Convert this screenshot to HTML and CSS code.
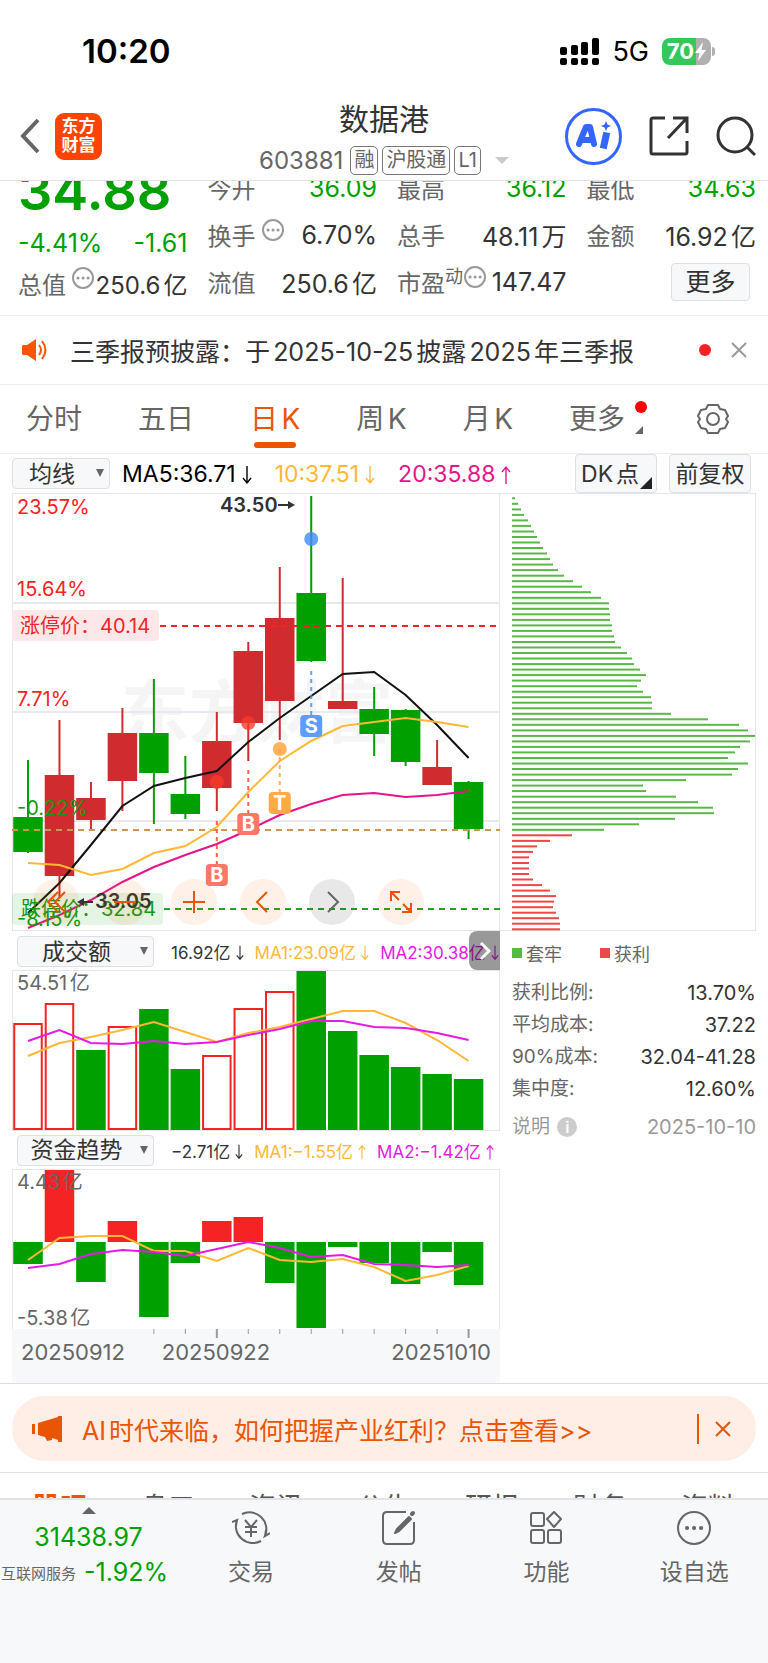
FILE: index.html
```html
<!DOCTYPE html>
<html lang="zh-CN">
<head>
    <meta charset="UTF-8">
    <meta name="viewport" content="width=device-width, initial-scale=1.0">
    <title>数据港 603881</title>
    <link rel="stylesheet" href="styles.css">
</head>
<body>

<svg class="defs" aria-hidden="true">
    <symbol id="down" viewBox="0 0 10 20"><path d="M5 1v17M1 13l4 5 4-5" stroke-width="1.4"/></symbol>
    <symbol id="up" viewBox="0 0 10 20"><path d="M5 19V2M1 7l4-5 4 5" stroke-width="1.4"/></symbol>
    <symbol id="dots" viewBox="0 0 22 22"><circle cx="11" cy="11" r="10"/><path d="M6 11h.1M11 11h.1M16 11h.1" stroke-width="3" stroke-linecap="round"/></symbol>
    <symbol id="close" viewBox="0 0 16 16"><path d="M1 1l14 14M15 1L1 15"/></symbol>
</svg>

<div class="status-bar">
    <span class="clock">10:20</span>
    <div class="status-right">
        <svg width="39" height="27" viewBox="0 0 39 27">
            <rect x="0" y="9" width="7" height="8" rx="2"/>
            <rect x="11" y="7" width="7" height="10" rx="2"/>
            <rect x="21" y="4" width="7" height="13" rx="2"/>
            <rect x="32" y="0" width="7" height="17" rx="2"/>
            <rect x="0" y="20" width="7" height="7" rx="2"/>
            <rect x="11" y="20" width="7" height="7" rx="2"/>
            <rect x="21" y="20" width="7" height="7" rx="2"/>
            <rect x="32" y="20" width="7" height="7" rx="2"/>
        </svg>
        <span class="network">5G</span>
        <div class="battery">
            <span>70</span>
            <svg width="11" height="19" viewBox="0 0 11 19"><path fill="#fff" d="M8 0L0 11h4.500L3 19l8-11H6.500z"/></svg>
        </div>
    </div>
</div>

<header class="header">
    <div class="header-left">
        <button class="icon-btn" aria-label="返回">
            <svg width="20" height="36" viewBox="0 0 20 36"><path d="M18 2L3 18l15 16" fill="none" stroke="#666" stroke-width="4"/></svg>
        </button>
        <a class="logo" href="#">东方<br>财富</a>
    </div>
    <div class="header-title">
        <h1>数据港</h1>
        <div class="code-row">
            <span class="code">603881</span>
            <span class="tag">融</span>
            <span class="tag">沪股通</span>
            <span class="tag">L1</span>
            <span class="code-arrow"></span>
        </div>
    </div>
    <div class="header-right">
        <button class="icon-btn" aria-label="AI">
            <svg width="57" height="57" viewBox="0 0 57 57" fill="none" stroke="#3366ff">
                <circle cx="28.500" cy="28.500" r="27" stroke-width="3"/>
                <path d="M14 36l7-17h4l4 17M18 32h9" stroke-width="6" stroke-linejoin="round" stroke-linecap="round"/>
                <path d="M41 28l-2 9" stroke-width="7" stroke-linecap="square"/>
                <path d="M41 13l1.500 3.500L46 18l-3.500 1.500L41 23l-1.500-3.500L36 18l3.500-1.500z" fill="#3366ff" stroke="none"/>
            </svg>
        </button>
        <button class="icon-btn" aria-label="分享">
            <svg width="40" height="40" viewBox="0 0 40 40" fill="none" stroke="#333" stroke-width="3">
                <path d="M16 2H4q-2 0-2 2v32q0 2 2 2h32q2 0 2-2V25"/><path d="M24 2h14v15M38 2L19 22"/>
            </svg>
        </button>
        <button class="icon-btn" aria-label="搜索">
            <svg width="40" height="40" viewBox="0 0 40 40" fill="none" stroke="#333" stroke-width="3">
                <circle cx="19" cy="19" r="17"/><path d="M31 31l8 8"/>
            </svg>
        </button>
    </div>
</header>

<section class="quote">
    <div class="quote-grid">
        <div class="quote-col">
            <div class="price">34.88</div>
            <div class="change"><span>-4.41%</span><span>-1.61</span></div>
            <div class="quote-last"><span class="name">总值</span><svg class="dots"><use href="#dots"/></svg><span>250.6亿</span></div>
        </div>
        <div class="quote-col">
            <div class="quote-row"><span class="name">今开</span><span class="val green">36.09</span></div>
            <div class="quote-row"><span class="name">换手</span><svg class="dots"><use href="#dots"/></svg><span class="val">6.70%</span></div>
            <div class="quote-row"><span class="name">流值</span><span class="val">250.6亿</span></div>
        </div>
        <div class="quote-col">
            <div class="quote-row"><span class="name">最高</span><span class="val green">36.12</span></div>
            <div class="quote-row"><span class="name">总手</span><span class="val">48.11万</span></div>
            <div class="quote-row tight"><span class="name">市盈<sup>动</sup></span><svg class="dots"><use href="#dots"/></svg><span class="val">147.47</span></div>
        </div>
        <div class="quote-col">
            <div class="quote-row"><span class="name">最低</span><span class="val green">34.63</span></div>
            <div class="quote-row"><span class="name">金额</span><span class="val">16.92亿</span></div>
            <div class="quote-row"><button class="more-btn">更多</button></div>
        </div>
    </div>
</section>

<section class="notice">
    <svg width="26" height="22" viewBox="0 0 26 22" fill="none" stroke="#ff5500" stroke-width="2">
        <path d="M1 6h4l9-6v22l-9-6H1q-1 0-1-2V8q0-2 1-2z" fill="#ff5500" stroke="none"/>
        <path d="M17 6q4 5 0 10M20 2q7 9 0 18"/>
    </svg>
    <a class="notice-text" href="#">三季报预披露：于2025-10-25披露2025年三季报</a>
    <span class="red-dot"></span>
    <button class="icon-btn" aria-label="关闭公告"><svg class="close"><use href="#close"/></svg></button>
</section>

<nav class="tabs">
    <a href="#">分时</a>
    <a href="#">五日</a>
    <a href="#" class="active">日K</a>
    <a href="#">周K</a>
    <a href="#">月K</a>
    <a href="#" class="tab-more">更多<i class="tab-dot"></i><i class="corner"></i></a>
    <button class="icon-btn" aria-label="设置">
        <svg width="32" height="32" viewBox="0 0 32 32" fill="none" stroke="#666" stroke-width="2">
            <path d="M11 2h10l2 4 5 1 3 6-2 3 2 3-3 6-5 1-2 4H11l-2-4-5-1-3-6 2-3-2-3 3-6 5-1z" stroke-linejoin="round"/><circle cx="16" cy="16" r="6"/>
        </svg>
    </button>
</nav>

<div class="ma-bar">
    <span class="select small"><select aria-label="均线"><option>均线</option></select></span>
    <span class="ma-item">MA5:36.71<svg class="arrow"><use href="#down"/></svg></span>
    <span class="ma-item yellow">10:37.51<svg class="arrow"><use href="#down"/></svg></span>
    <span class="ma-item pink">20:35.88<svg class="arrow"><use href="#up"/></svg></span>
    <button class="box-btn dk">DK点<i class="corner"></i></button>
    <button class="box-btn">前复权</button>
</div>

<main class="charts">
    <div class="left">
        <div class="kline">
            <svg viewBox="0 0 488 438">
                <text class="watermark" x="109" y="244">东方财富</text>
                <path class="frame" d="M.5 438V.500H488M487.500 0v438M0 437.500h488"/>
                <path class="grid" d="M0 110h488M0 219h488M0 328h488"/>
                <g id="candles"></g>
                <path class="dash red-dash" d="M148 133h340"/>
                <path class="dash brown-dash" d="M0 337h488"/>
                <path class="dash green-dash" d="M152 416h336"/>
                <g id="klines"></g>
                <rect class="limit-up" y="117" width="147" height="31" rx="4"/>
                <rect class="limit-down" y="400" width="151" height="32" rx="4"/>
                <text class="t-red" x="5" y="21">23.57%</text>
                <text class="t-red" x="5" y="103">15.64%</text>
                <text class="t-red" x="5" y="213">7.71%</text>
                <text class="t-green" x="5" y="322">-0.22%</text>
                <text class="t-green" x="5" y="433">-8.15%</text>
                <text class="t-red" x="8" y="140">涨停价：40.14</text>
                <text class="t-green" x="9" y="423">跌停价：32.84</text>
                <text class="t-bold" x="208" y="19">43.50</text>
                <path class="pointer" d="M266 12h14"/><path d="M276 8l7 4-7 4z" fill="#333"/>
                <text class="t-bold" x="83" y="415">33.05</text>
                <path class="pointer" d="M68 409h13"/><path d="M72 405l-7 4 7 4z" fill="#333"/>
                <g id="marks"></g>
            </svg>
            <div class="tools">
                <button aria-label="最左"><svg viewBox="0 0 24 24"><path d="M14 2L4 12l10 10M21 2L11 12l10 10"/></svg></button>
                <button aria-label="缩小"><svg viewBox="0 0 24 24"><path d="M1 12h22"/></svg></button>
                <button aria-label="放大"><svg viewBox="0 0 24 24"><path d="M1 12h22M12 1v22"/></svg></button>
                <button aria-label="左移"><svg viewBox="0 0 24 24"><path d="M16 2L6 12l10 10"/></svg></button>
                <button aria-label="右移" class="gray"><svg viewBox="0 0 24 24"><path d="M8 2l10 10L8 22"/></svg></button>
                <button aria-label="全屏"><svg viewBox="0 0 24 24"><path d="M2 11V2h9M2 2l8 8M22 13v9h-9M22 22l-8-8"/></svg></button>
            </div>
        </div>

        <div class="sub-bar">
            <span class="select"><select aria-label="成交额指标"><option>成交额</option></select></span>
            <span class="sub-item">16.92亿<svg class="arrow"><use href="#down"/></svg></span>
            <span class="sub-item yellow">MA1:23.09亿<svg class="arrow"><use href="#down"/></svg></span>
            <span class="sub-item purple">MA2:30.38亿<svg class="arrow"><use href="#down"/></svg></span>
            <button class="expand" aria-label="收起筹码"><svg width="12" height="20" viewBox="0 0 12 20"><path d="M2 2l8 8-8 8" fill="none" stroke="#fff" stroke-width="3"/></svg></button>
        </div>
        <svg viewBox="0 0 488 161">
            <path class="frame" d="M0 .5h488M.5 0v161M487.500 0v161M0 160.500h488"/>
            <g id="volume"></g>
            <text class="t-gray" x="5" y="20">54.51亿</text>
        </svg>

        <div class="sub-bar fund-bar">
            <span class="select"><select aria-label="资金指标"><option>资金趋势</option></select></span>
            <span class="sub-item">−2.71亿<svg class="arrow"><use href="#down"/></svg></span>
            <span class="sub-item yellow">MA1:−1.55亿<svg class="arrow"><use href="#up"/></svg></span>
            <span class="sub-item purple">MA2:−1.42亿<svg class="arrow"><use href="#up"/></svg></span>
        </div>
        <svg viewBox="0 0 488 160">
            <path class="frame" d="M0 .5h488M.5 0v160M487.500 0v160"/>
            <g id="fund"></g>
            <text class="t-gray" x="5" y="20">4.43亿</text>
            <text class="t-gray" x="5" y="156">-5.38亿</text>
        </svg>
        <svg class="axis" viewBox="0 0 488 54">
            <g id="ticks"></g>
            <text x="9" y="31">20250912</text>
            <text x="204" y="31" text-anchor="middle">20250922</text>
            <text x="479" y="31" text-anchor="end">20251010</text>
        </svg>
    </div>

    <div class="right">
        <svg viewBox="0 0 256 438">
            <path class="frame" d="M0 .5h256M255.500 0v438M0 437.500h256"/>
            <g id="chips"></g>
        </svg>
        <div class="chip-info">
            <div class="legend"><i class="sq"></i>套牢<i class="sq red"></i>获利</div>
            <dl>
                <div><dt>获利比例:</dt><dd>13.70%</dd></div>
                <div><dt>平均成本:</dt><dd>37.22</dd></div>
                <div><dt>90%成本:</dt><dd>32.04-41.28</dd></div>
                <div><dt>集中度:</dt><dd>12.60%</dd></div>
            </dl>
            <div class="explain"><a href="#">说明 <i>i</i></a><span>2025-10-10</span></div>
        </div>
    </div>
</main>

<section class="banner-wrap">
    <div class="banner">
        <svg width="30" height="26" viewBox="0 0 30 26" fill="#ea5504">
            <path d="M0 8h3v10H0zM6 7L26 1V0h4v26h-4v-2l-6-2v2l-5 1-2-4-7-2z"/>
        </svg>
        <a href="#">AI时代来临，如何把握产业红利？点击查看&gt;&gt;</a>
        <button class="icon-btn" aria-label="关闭广告"><svg class="close"><use href="#close"/></svg></button>
    </div>
</section>

<nav class="detail-tabs">
    <a href="#" class="active">股吧</a>
    <a href="#">盘口</a>
    <a href="#">资讯</a>
    <a href="#">公告</a>
    <a href="#">研报</a>
    <a href="#">财务</a>
    <a href="#">资料</a>
</nav>

<footer class="bottom-bar">
    <a href="#" class="index">
        <i class="index-arrow"></i>
        <span class="index-value">31438.97</span>
        <span class="index-row"><small>互联网服务</small><b>-1.92%</b></span>
    </a>
    <a href="#" class="bottom-item">
        <svg width="38" height="38" viewBox="0 0 38 38">
            <path d="M10 5A17 17 0 0 1 33 27l5-3M33 27l1-6M29 32A17 17 0 0 1 5 11L0 13M5 11l-1 6"/>
            <path d="M13 11l6 7 6-7M19 18v10M13 18h12M13 23h12"/>
        </svg>
        交易
    </a>
    <a href="#" class="bottom-item">
        <svg width="38" height="38" viewBox="0 0 38 38">
            <path d="M26 3H7Q3 3 3 7v24q0 4 4 4h23q4 0 4-4V13"/><path d="M29 8l2 2-12 12-4 2 2-4zM32 5l1-1" fill="#666" stroke-linecap="round" stroke-linejoin="round"/>
            <path d="M32 5l1-1" stroke-width="4" stroke-linecap="round"/>
        </svg>
        发帖
    </a>
    <a href="#" class="bottom-item">
        <svg width="38" height="38" viewBox="0 0 38 38">
            <rect x="4" y="4" width="13" height="13" rx="2"/><path d="M27 3l7 7-7 8-7-8z" stroke-linejoin="round"/>
            <rect x="4" y="21" width="13" height="13" rx="2"/><rect x="21" y="21" width="13" height="13" rx="2"/>
        </svg>
        功能
    </a>
    <a href="#" class="bottom-item">
        <svg width="38" height="38" viewBox="0 0 38 38">
            <circle cx="19" cy="19" r="16"/><path d="M12 19h.1M19 19h.1M26 19h.1" stroke-width="4" stroke-linecap="round"/>
        </svg>
        设自选
    </a>
</footer>

<script src="charts.js"></script>
</body>
</html>
```

FILE: styles.css
```css
* {
    box-sizing: border-box;
}

body {
    margin: 0;
    background: #fff;
    color: #333;
    font-family: Inter, "Noto Sans CJK SC", sans-serif;
    font-size: 24px;
    text-autospace: normal;
}

a {
    color: inherit;
    text-decoration: none;
}

button,
select {
    font-family: inherit;
    color: inherit;
    cursor: pointer;
}

.icon-btn {
    display: flex;
    padding: 0;
    border: none;
    background: none;
}

.defs {
    position: absolute;
    width: 0;
    height: 0;
}

.green { color: #00a000; }
.yellow { color: #ffb836; }
.pink { color: #e6148c; }
.purple { color: #e619e6; }

/* status bar */
.status-bar {
    display: flex;
    justify-content: space-between;
    align-items: center;
    height: 92px;
    padding: 10px 57px 0 82px;
    color: #000;
}

.clock {
    font-size: 33px;
    font-weight: 600;
}

.status-right {
    display: flex;
    align-items: center;
    gap: 13px;
}

.network {
    font-size: 27px;
}

.battery {
    position: relative;
    display: flex;
    align-items: center;
    justify-content: center;
    gap: 1px;
    width: 49px;
    height: 27px;
    border-radius: 8px;
    background: linear-gradient(90deg, #34c759 70%, #b0b0b0 70%);
    color: #fff;
    font-size: 22px;
    font-weight: 700;
}

.battery::after {
    content: "";
    position: absolute;
    right: -4px;
    width: 3px;
    height: 9px;
    border-radius: 0 3px 3px 0;
    background: #b0b0b0;
}

/* header */
.header {
    display: grid;
    grid-template-columns: 1fr auto 1fr;
    align-items: center;
    height: 89px;
    padding: 0 12px;
    border-bottom: 1px solid #e2e2e2;
}

.header-left {
    display: flex;
    align-items: center;
    gap: 15px;
    padding-left: 8px;
}

.logo {
    width: 47px;
    height: 47px;
    padding-top: 4px;
    border-radius: 9px;
    background: #ff4400;
    color: #fff;
    font-size: 17px;
    font-weight: 700;
    line-height: 19px;
    text-align: center;
}

.header-title {
    padding-top: 4px;
    text-align: center;
}

h1 {
    margin: 0;
    font-size: 30px;
    font-weight: 400;
    line-height: 44px;
}

.code-row {
    display: flex;
    align-items: center;
    gap: 4px;
    height: 38px;
    color: #666;
}

.code {
    margin-right: 3px;
}

.tag {
    height: 29px;
    padding: 0 3px;
    border: 1px solid #777;
    border-radius: 5px;
    font-size: 20px;
    line-height: 27px;
}

.code-arrow {
    margin-left: 10px;
    border: 7px solid transparent;
    border-top-color: #ccc;
    border-bottom: none;
}

.header-right {
    display: flex;
    align-items: center;
    justify-content: flex-end;
    gap: 27px;
}

/* quote */
.quote {
    overflow: hidden;
    border-bottom: 1px solid #eee;
}

.quote-grid {
    display: grid;
    grid-template-columns: repeat(4, minmax(0, 1fr));
    gap: 20px;
    margin-top: -17px;
    padding: 0 12px 10px 18px;
    white-space: nowrap;
}

.price {
    height: 56px;
    color: #00a000;
    font-size: 54px;
    font-weight: 600;
    line-height: 54px;
}

.change {
    display: flex;
    justify-content: space-between;
    color: #00a000;
    font-size: 25px;
    line-height: 46px;
}

.quote-row,
.quote-last {
    display: flex;
    justify-content: space-between;
    align-items: center;
    height: 47px;
}

.quote-last {
    height: 34px;
}

.name {
    color: #666;
}

.val {
    font-size: 25px;
}

.name sup {
    font-size: 18px;
    line-height: 18px;
}

.dots {
    flex: none;
    width: 22px;
    height: 22px;
    margin: 0 auto 10px 6px;
    fill: none;
    stroke: #999;
    stroke-width: 2;
}

.tight .dots {
    margin-left: 1px;
}

.more-btn {
    width: 79px;
    height: 38px;
    margin: 0 6px 0 auto;
    padding: 0;
    border: 1px solid #dcdfe6;
    border-radius: 4px;
    background: #f7f8fa;
    font-size: 25px;
    line-height: 34px;
}

/* notice */
.notice {
    display: flex;
    align-items: center;
    height: 69px;
    padding: 0 21px 0 22px;
    border-bottom: 1px solid #eee;
}

.notice-text {
    flex: 1;
    margin-left: 22px;
    font-size: 25px;
    white-space: nowrap;
}

.red-dot {
    width: 12px;
    height: 12px;
    margin-right: 20px;
    border-radius: 50%;
    background: #f52323;
}

.close {
    width: 16px;
    height: 16px;
    stroke: #999;
    stroke-width: 2;
}

/* period tabs */
.tabs {
    display: flex;
    justify-content: space-between;
    align-items: center;
    height: 69px;
    padding: 0 39px 0 23px;
    border-bottom: 1px solid #eee;
    color: #666;
    font-size: 28px;
}

.tabs a {
    position: relative;
    padding: 0 3px;
    line-height: 66px;
}

.tabs .active {
    color: #ea5504;
}

.tabs .active::after {
    content: "";
    position: absolute;
    left: 7px;
    right: 7px;
    bottom: 4px;
    height: 6px;
    border-radius: 3px;
    background: #ea5504;
}

.tabs .tab-more {
    padding-right: 22px;
}

.tab-dot {
    position: absolute;
    top: 15px;
    right: 0;
    width: 12px;
    height: 12px;
    border-radius: 50%;
    background: #ff0000;
}

.corner {
    position: absolute;
    right: 4px;
    bottom: 18px;
    border: 4px solid #666;
    border-top-color: transparent;
    border-left-color: transparent;
}

/* moving average bar */
.ma-bar {
    display: flex;
    align-items: center;
    gap: 12px;
    height: 39px;
    padding: 0 17px 0 12px;
    white-space: nowrap;
}

.select {
    position: relative;
    width: 137px;
    height: 31px;
}

.select.small {
    width: 98px;
}

.select::after {
    content: "";
    position: absolute;
    top: 11px;
    right: 6px;
    border: 4px solid transparent;
    border-top: 8px solid #666;
    border-bottom: none;
    pointer-events: none;
}

.select select {
    width: 100%;
    height: 100%;
    padding: 0 22px 0 4px;
    border: 1px solid #dcdfe6;
    border-radius: 4px;
    background: #f7f8fa;
    font-size: 23px;
    line-height: 28px;
    text-align-last: center;
    appearance: none;
}

.ma-item {
    margin-right: 11px;
    color: #e6148c;
    font-size: 23px;
}

.ma-item:nth-of-type(2) {
    color: #000;
}

.ma-item.yellow {
    color: #ffb836;
}

.arrow {
    width: 10px;
    height: 20px;
    margin-left: 6px;
    vertical-align: -3px;
    fill: none;
    stroke: currentColor;
}

.box-btn {
    position: relative;
    height: 39px;
    width: 82px;
    padding: 0;
    border: 1px solid #dcdfe6;
    border-radius: 4px;
    background: #f7f8fa;
    font-size: 23px;
    line-height: 34px;
}

.dk {
    margin-left: auto;
    padding-right: 12px;
}

.dk .corner {
    right: 4px;
    bottom: 3px;
    border-width: 6px;
    border-right-color: #222;
    border-bottom-color: #222;
}

/* charts */
.charts {
    display: grid;
    grid-template-columns: minmax(0, 488fr) minmax(0, 256fr);
    padding: 0 12px;
    border-bottom: 1px solid #dcdce6;
}

.charts .left > svg,
.kline > svg,
.right > svg {
    display: block;
    width: 100%;
}

.charts text {
    font-size: 20px;
}

.frame {
    fill: none;
    stroke: #e4e6ea;
}

.grid {
    stroke: #e8eaf0;
    stroke-width: 2;
}

.charts .watermark {
    fill: #f5f5f5;
    font-size: 68px;
    font-weight: 700;
}

.dash {
    stroke-width: 2;
    stroke-dasharray: 6 5;
}

.red-dash { stroke: #f22323; }
.brown-dash { stroke: #cc9655; }
.green-dash { stroke: #22a422; }

.limit-up { fill: #fde8e9; }
.limit-down { fill: rgba(0, 160, 0, 0.1); }

.t-red { fill: #f52323; }
.t-green { fill: #129a12; }
.t-gray { fill: #666; }

.t-bold {
    fill: #333;
    font-weight: 600;
}

.pointer {
    stroke: #333;
    stroke-width: 2;
}

.line {
    fill: none;
    stroke-width: 2;
}

.mark {
    fill: #fff;
    font-weight: 700;
    text-anchor: middle;
}

.kline {
    position: relative;
}

.tools {
    position: absolute;
    left: 21px;
    bottom: 6px;
    display: flex;
    gap: 23px;
}

.tools button {
    display: flex;
    align-items: center;
    justify-content: center;
    width: 46px;
    height: 46px;
    padding: 0;
    border: none;
    border-radius: 50%;
    background: rgba(255, 85, 4, 0.09);
    color: #ea5504;
}

.tools .gray {
    background: rgba(0, 0, 0, 0.09);
    color: #666;
}

.tools svg {
    width: 24px;
    height: 24px;
    fill: none;
    stroke: currentColor;
    stroke-width: 2;
}

.sub-bar {
    position: relative;
    display: flex;
    align-items: center;
    gap: 11px;
    height: 39px;
    padding: 2px 0 0 5px;
    font-size: 17px;
    white-space: nowrap;
    text-autospace: no-autospace;
}

.fund-bar {
    height: 38px;
    padding-top: 0;
}

.sub-bar .select {
    flex: none;
    margin-right: 6px;
}

.sub-bar .arrow {
    width: 8px;
    height: 16px;
    margin-left: 5px;
    vertical-align: -2px;
}

.expand {
    position: absolute;
    top: 0;
    right: 0;
    display: flex;
    align-items: center;
    justify-content: center;
    width: 31px;
    height: 39px;
    padding: 0;
    border: none;
    border-radius: 8px 0 0 8px;
    background: rgba(0, 0, 0, 0.4);
}

.axis {
    background: #f7f8fa;
}

.charts .axis text {
    fill: #666;
    font-size: 22px;
}

/* chip distribution */
.chip-info {
    padding: 5px 0 0 12px;
    font-size: 20px;
}

.legend {
    display: flex;
    align-items: center;
    height: 34px;
    margin-bottom: 7px;
    color: #666;
    font-size: 18px;
}

.sq {
    width: 10px;
    height: 10px;
    margin-right: 4px;
    background: #5ab946;
}

.sq.red {
    margin-left: 38px;
    background: #ee4848;
}

dl {
    margin: 0;
}

dl div,
.explain {
    display: flex;
    justify-content: space-between;
    line-height: 32px;
}

dt {
    color: #666;
    font-size: 19px;
    text-autospace: no-autospace;
}

dd {
    margin: 0;
}

.explain {
    margin-top: 6px;
    color: #999;
}

.explain a {
    font-size: 19px;
}

.explain i {
    display: inline-block;
    width: 20px;
    height: 20px;
    margin-left: 2px;
    border-radius: 50%;
    background: #ccc;
    color: #fff;
    font-size: 16px;
    font-style: normal;
    font-weight: 600;
    line-height: 20px;
    text-align: center;
}

/* banner */
.banner-wrap {
    padding: 12px 12px 11px;
    border-bottom: 1px solid #e2e2e2;
}

.banner {
    display: flex;
    align-items: center;
    height: 65px;
    padding: 0 25px 0 20px;
    border-radius: 33px;
    background: #feeee6;
    color: #ea5504;
    font-size: 25px;
}

.banner a {
    flex: 1;
    margin-left: 20px;
    white-space: nowrap;
}

.banner .icon-btn {
    padding: 7px 0 7px 16px;
    border-left: 2px solid #ea5504;
}

.banner .close {
    stroke: #ea5504;
}

/* detail tabs */
.detail-tabs {
    display: flex;
    height: 25px;
    padding: 19px 6px 0;
    overflow: hidden;
    color: #555;
    font-size: 27px;
    line-height: 32px;
}

.detail-tabs a {
    flex: 1;
    text-align: center;
}

.detail-tabs .active {
    color: #ea5504;
    font-weight: 700;
}

/* bottom bar */
.bottom-bar {
    display: flex;
    height: 165px;
    border-top: 2px solid #e2e3e6;
    background: #f7f8fa;
    color: #666;
}

.index {
    display: flex;
    flex-direction: column;
    align-items: center;
    width: 177px;
    padding-top: 7px;
    font-size: 25px;
    white-space: nowrap;
}

.index-arrow {
    border: 7px solid transparent;
    border-bottom-color: #666;
    border-top: none;
}

.index-value {
    color: #00a000;
    line-height: 46px;
}

.index-row {
    display: flex;
    align-items: center;
    gap: 8px;
    width: 100%;
    height: 24px;
    padding-left: 1px;
}

.index-row small {
    font-size: 15px;
}

.index-row b {
    color: #00a000;
    font-weight: 400;
}

.bottom-item {
    display: flex;
    flex: 1;
    flex-direction: column;
    align-items: center;
    gap: 9px;
    padding-top: 9px;
    font-size: 23px;
    line-height: 32px;
}

.bottom-item svg {
    fill: none;
    stroke: #666;
    stroke-width: 2;
}
```

FILE: charts.js
```js
const RED = '#d02b2e';
const GREEN = '#00a000';
const FIRST = 16;
const STEP = 31.47;
const BAR = 29.5;

const center = i => FIRST + i * STEP;

function add(id, tag, attrs, text) {
    const el = document.createElementNS('http://www.w3.org/2000/svg', tag);
    for (const key in attrs) el.setAttribute(key, attrs[key]);
    if (text) el.textContent = text;
    document.getElementById(id).appendChild(el);
}

function line(id, ys, color) {
    const points = ys.map((y, i) => center(i).toFixed(1) + ',' + y).join(' ');
    add(id, 'polyline', { points, stroke: color, class: 'line' });
}

// high, body top, body bottom, low, rising
const candles = [
    [267, 324, 359, 360, 0], [227, 282, 383, 405, 1], [289, 305, 327, 337, 1],
    [215, 240, 288, 318, 1], [186, 240, 280, 331, 0], [263, 301, 321, 326, 0],
    [219, 248, 295, 318, 1], [149, 158, 230, 268, 1], [74, 125, 208, 247, 1],
    [3, 100, 168, 169, 0], [85, 208, 216, 216, 1], [194, 216, 241, 263, 0],
    [216, 217, 269, 273, 0], [247, 274, 292, 292, 1], [288, 289, 336, 346, 0]
];
candles.forEach(([high, top, bottom, low, up], i) => {
    const fill = up ? RED : GREEN;
    add('candles', 'rect', { x: center(i) - 1, y: high, width: 2, height: low - high, fill });
    add('candles', 'rect', { x: center(i) - BAR / 2, y: top, width: BAR, height: bottom - top, fill });
});

line('klines', [420, 390, 352, 313, 293, 285, 278, 249, 225, 203, 181, 179, 202, 232, 265], '#111');
line('klines', [370, 372, 382, 376, 360, 353, 334, 299, 268, 248, 233, 229, 225, 229, 234], '#ffb836');
line('klines', [435, 422, 407, 389, 374, 362, 351, 337, 322, 311, 302, 300, 304, 302, 298], '#e6148c');

// trade marks: index, dot y, dash start, box top
const marks = [
    ['B', 6, 289, 328, 371, '#ff7766', '#f93b2c'],
    ['B', 7, 230, 277, 320, '#ff7766', '#f93b2c'],
    ['T', 8, 256, 256, 299, '#ffab45', '#ffa033'],
    ['S', 9, 46, 178, 222, '#5c9dff', '#3d8bfd']
];
marks.forEach(([name, i, dot, from, top, box, color]) => {
    const x = center(i);
    add('marks', 'circle', { cx: x, cy: dot, r: 7, fill: color, opacity: 0.8 });
    add('marks', 'path', { d: `M${x} ${from}V${top}`, stroke: color, 'stroke-width': 2, 'stroke-dasharray': '4 4', opacity: 0.8 });
    add('marks', 'rect', { x: x - 11, y: top, width: 22, height: 22, rx: 4, fill: box });
    add('marks', 'text', { x, y: top + 18, class: 'mark' }, name);
});

const volume = [
    [54, 1], [34, 1], [80, 0], [57, 1], [39, 0], [99, 0], [86, 1], [39, 1],
    [22, 1], [1, 0], [61, 0], [85, 0], [97, 0], [104, 0], [109, 0]
];
volume.forEach(([top, up], i) => {
    const x = center(i) - BAR / 2;
    if (up) {
        add('volume', 'rect', { x: x + 1, y: top, width: BAR - 2, height: 159 - top, fill: '#fff', stroke: '#f52323', 'stroke-width': 2 });
    } else {
        add('volume', 'rect', { x, y: top, width: BAR, height: 160 - top, fill: GREEN });
    }
});
line('volume', [86, 73, 67, 60, 52, 62, 72, 63, 57, 49, 41, 41, 53, 70, 91], '#ffb836');
line('volume', [71, 60, 73, 74, 71, 74, 72, 65, 59, 51, 51, 57, 58, 63, 70], '#e619e6');

const ZERO = 73;
const fund = [95, 1, 113, 52, 148, 94, 52, 48, 114, 159, 78, 94, 115, 83, 116];
fund.forEach((y, i) => {
    add('fund', 'rect', {
        x: center(i) - BAR / 2,
        y: Math.min(y, ZERO),
        width: BAR,
        height: Math.abs(y - ZERO),
        fill: y < ZERO ? '#f52323' : GREEN
    });
});
line('fund', [91, 69, 67, 67, 82, 82, 92, 79, 91, 93, 90, 98, 112, 106, 97], '#ffb836');
line('fund', [99, 95, 85, 81, 83, 87, 80, 73, 79, 88, 86, 95, 96, 98, 96], '#e619e6');

for (let i = 4; i < 15; i++) {
    const major = i === 6 || i === 14;
    add('ticks', 'path', { d: `M${center(i)} 0v${major ? 9 : 5}`, stroke: '#999', 'stroke-width': major ? 2 : 1 });
}

const trapped = [
    3, 6, 9, 12, 16, 19, 22, 25, 28, 31, 35, 38, 41, 46, 52, 61, 70, 79, 89, 97,
    97, 98, 98, 100, 100, 102, 103, 109, 115, 120, 122, 128, 134, 129, 125, 131, 139, 140, 140, 159,
    196, 227, 236, 243, 238, 228, 223, 216, 236, 226, 220, 174, 131, 134, 164, 186, 201, 202, 163, 127, 92
];
const profit = [60, 38, 25, 21, 17, 17, 17, 17, 21, 30, 38, 44, 42, 41, 44, 47, 48, 48];
trapped.concat(profit).forEach((width, i) => {
    add('chips', 'rect', {
        x: 12,
        y: (4.3 + i * 5.525).toFixed(1),
        width,
        height: 2,
        fill: i < trapped.length ? '#5ab946' : '#ee4848'
    });
});
```
